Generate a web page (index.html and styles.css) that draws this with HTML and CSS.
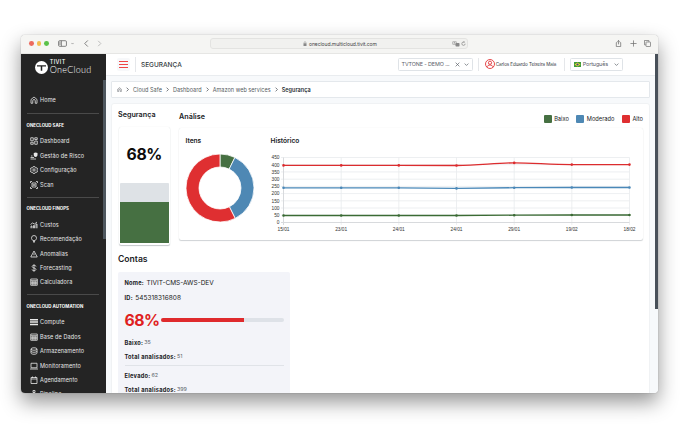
FILE: index.html
```html
<!DOCTYPE html>
<html lang="pt-BR">
<head>
    <meta charset="UTF-8">
    <meta name="viewport" content="width=device-width, initial-scale=1.0">
    <title>OneCloud - Segurança</title>
    <link rel="stylesheet" href="styles.css">
</head>
<body>
    <!-- ícones reutilizados -->
    <svg class="sprite" viewBox="0 0 16 16">
        <symbol id="i-home" viewBox="0 0 16 16"><path d="M2 7l6-5 6 5v7.500h-3.500V9.500a2.500 2.500 0 0 0-5 0v5H2z"/></symbol>
        <symbol id="i-dashboard" viewBox="0 0 16 16"><path d="M1.500 1.500h5v6h-5zM9.500 1.500h5v3.500h-5zM9.500 8h5v6.500h-5zM1.500 10.500h5v4h-5z"/></symbol>
        <symbol id="i-risk" viewBox="0 0 16 16"><path d="M1 14h11M1 11h7M2 8h3"/><path class="fill" d="M7.500 2l3.700-1L15 2v4c0 2-2 4-3.800 4s-3.700-2-3.700-4z"/></symbol>
        <symbol id="i-gear" viewBox="0 0 16 16"><path d="M6.500 1h3l.6 2 1.800 1 2-.5 1.500 2.600L14 7.600v1l1.400 1.400-1.500 2.600-2-.5-1.800 1-.6 2h-3l-.6-2-1.800-1-2 .5L.6 10 2 8.600v-1L.6 6.100l1.500-2.600 2 .5 1.800-1z"/><circle cx="8" cy="8" r="2.300"/></symbol>
        <symbol id="i-scan" viewBox="0 0 16 16"><path d="M1 4V1h3M12 1h3v3M15 12v3h-3M4 15H1v-3M4 4h8v8H4zM6.500 6v4M9.500 6v4"/></symbol>
        <symbol id="i-cost" viewBox="0 0 16 16"><path d="M1 7l4-3 4 2 5-4M2 14.500V10h2v4.500M7 14.500V9h2v5.500M12 14.500V6h2v8.500"/></symbol>
        <symbol id="i-bulb" viewBox="0 0 16 16"><path d="M6 11C3.500 9.500 3 7.500 3 6a5 5 0 0 1 10 0c0 1.500-.5 3.500-3 5zM6 13h4M7 15h2"/></symbol>
        <symbol id="i-alert" viewBox="0 0 16 16"><path d="M8 2l6.500 12h-13zM8 6.500v3.500M8 11.500v1"/></symbol>
        <symbol id="i-dollar" viewBox="0 0 16 16"><path d="M12 5c0-1.500-1.500-2.300-4-2.300S4.300 3.500 4.300 5.200c0 3.600 7.600 2 7.600 5.500 0 1.700-1.500 2.500-3.900 2.500s-4-.9-4-2.400M8 .5v15"/></symbol>
        <symbol id="i-calc" viewBox="0 0 16 16"><path d="M1.500 2h13v12.500h-13zM1.500 5.500h13M1.500 8.500h13M1.500 11.500h13M5.800 5.500v9M10.200 5.500v9"/></symbol>
        <symbol id="i-compute" viewBox="0 0 16 16"><path class="fill" d="M0 2h16v3H0zM0 6.700h16v3H0zM0 11.400h16v3H0z"/></symbol>
        <symbol id="i-disk" viewBox="0 0 16 16"><ellipse cx="8" cy="4" rx="6" ry="2.500"/><path d="M2 4v8c0 3.400 12 3.400 12 0V4M2 8c0 3.400 12 3.400 12 0"/></symbol>
        <symbol id="i-screen" viewBox="0 0 16 16"><path d="M2 2.500h12v9H2zM0 14h16"/></symbol>
        <symbol id="i-calendar" viewBox="0 0 16 16"><path d="M2 3h12v12H2zM2 6h12M5 1v3M11 1v3"/></symbol>
        <symbol id="i-pipe" viewBox="0 0 16 16"><path d="M6 1h4v4H6zM8 5v4M2 12V9h12v3M0 12h4v3H0zM12 12h4v3h-4z"/></symbol>
        <symbol id="i-down" viewBox="0 0 16 16"><path d="M2 5l6 6 6-6"/></symbol>
        <symbol id="i-right" viewBox="0 0 16 16"><path d="M5 2l6 6-6 6"/></symbol>
        <symbol id="i-left" viewBox="0 0 16 16"><path d="M11 1L4 8l7 7"/></symbol>
    </svg>

    <div class="window">
        <div class="toolbar">
            <div class="lights"><i class="red"></i><i class="yellow"></i><i class="green"></i></div>
            <svg class="tb-panel" viewBox="0 0 16 12"><rect x="1" y="1" width="14" height="10" rx="2"/><path d="M6 1v10M2.500 3.500h2M2.500 5.500h2M2.500 7.500h2"/></svg>
            <svg class="tb-caret"><use href="#i-down"/></svg>
            <svg class="tb-back"><use href="#i-left"/></svg>
            <svg class="tb-next"><use href="#i-right"/></svg>
            <div class="address">
                <svg class="lock" viewBox="0 0 8 10"><path class="fill" d="M1 4.500h6V10H1z"/><path d="M2.300 4.500V3a1.700 1.700 0 0 1 3.400 0v1.500"/></svg>
                <span>onecloud.multicloud.tivit.com</span>
                <svg class="translate" viewBox="0 0 16 12"><rect x="1" y="1" width="8" height="6" rx="1.500"/><path d="M3 3h4M5 2.500v1.500l-2 2M5 4l2 2"/><rect class="fill" x="7" y="4" width="8" height="7" rx="1.500"/></svg>
                <svg class="reload" viewBox="0 0 12 12"><path d="M10 6.500A4 4 0 1 1 6 2.500h2M6.500.5l2 2-2 2"/></svg>
            </div>
            <div class="tb-actions">
                <svg viewBox="0 0 16 16"><path d="M5 6H3v9h10V6h-2M8 10V1M5 4l3-3 3 3"/></svg>
                <svg viewBox="0 0 16 16"><path d="M8 1v14M1 8h14"/></svg>
                <svg viewBox="0 0 16 16"><path d="M4 11H1V1h10v3"/><rect x="4.500" y="4.500" width="10.500" height="10.500" rx="1.500"/></svg>
            </div>
        </div>

        <div class="app">
            <aside class="sidebar">
                <div class="brand">
                    <svg viewBox="0 0 26 26"><circle cx="13" cy="13" r="13"/><path d="M4 8.500h18v2.500h-7.500v8.500h-3V11H4z"/></svg>
                    <div class="brand-name"><b>TIVIT</b><span>OneCloud</span></div>
                </div>
                <nav class="menu">
                    <a class="home"><svg><use href="#i-home"/></svg>Home</a>
                    <section>
                        <h4>ONECLOUD SAFE</h4>
                        <a><svg><use href="#i-dashboard"/></svg>Dashboard</a>
                        <a><svg><use href="#i-risk"/></svg>Gestão de Risco</a>
                        <a><svg><use href="#i-gear"/></svg>Configuração</a>
                        <a><svg><use href="#i-scan"/></svg>Scan</a>
                    </section>
                    <section>
                        <h4>ONECLOUD FINOPS</h4>
                        <a><svg><use href="#i-cost"/></svg>Custos</a>
                        <a><svg><use href="#i-bulb"/></svg>Recomendação</a>
                        <a><svg><use href="#i-alert"/></svg>Anomalias</a>
                        <a><svg><use href="#i-dollar"/></svg>Forecasting</a>
                        <a><svg><use href="#i-calc"/></svg>Calculadora</a>
                    </section>
                    <section>
                        <h4>ONECLOUD AUTOMATION</h4>
                        <a><svg><use href="#i-compute"/></svg>Compute</a>
                        <a><svg><use href="#i-calc"/></svg>Base de Dados</a>
                        <a><svg><use href="#i-disk"/></svg>Armazenamento</a>
                        <a><svg><use href="#i-screen"/></svg>Monitoramento</a>
                        <a><svg><use href="#i-calendar"/></svg>Agendamento</a>
                        <a><svg><use href="#i-pipe"/></svg>Pipeline</a>
                    </section>
                </nav>
                <div class="side-scroll"></div>
            </aside>

            <main class="page">
                <header class="topbar">
                    <div class="burger"><i></i><i></i><i></i></div>
                    <h1>SEGURANÇA</h1>
                    <div class="select tenant"><span>TVTONE - DEMO ...</span><svg viewBox="0 0 16 16"><path d="M2 2l12 12M14 2L2 14"/></svg><svg><use href="#i-down"/></svg></div>
                    <div class="user">
                        <svg viewBox="0 0 20 20"><circle cx="10" cy="10" r="9"/><circle cx="10" cy="7.500" r="3.200"/><path d="M4 16.500c0-6 12-6 12 0"/></svg>
                        <span>Carlos Eduardo Teixeira Maia</span>
                    </div>
                    <div class="select lang">
                        <svg class="flag" viewBox="0 0 14 10"><path fill="#3f9b3a" d="M0 0h14v10H0z"/><path fill="#f2d82e" d="M7 1l6 4-6 4-6-4z"/><circle cx="7" cy="5" r="2.200" fill="#2b4a9b"/></svg>
                        <span>Português</span><svg><use href="#i-down"/></svg>
                    </div>
                </header>

                <div class="crumbs">
                    <svg class="crumb-home"><use href="#i-home"/></svg>
                    <svg><use href="#i-right"/></svg><span>Cloud Safe</span>
                    <svg><use href="#i-right"/></svg><span>Dashboard</span>
                    <svg><use href="#i-right"/></svg><span>Amazon web services</span>
                    <svg><use href="#i-right"/></svg><b>Segurança</b>
                </div>

                <div class="panel">
                    <div class="overview">
                        <div class="security">
                            <h2>Segurança</h2>
                            <div class="score-card">
                                <strong>68%</strong>
                                <div class="tank"><div class="tank-fill"></div></div>
                            </div>
                        </div>
                        <div class="analysis">
                            <div class="analysis-head">
                                <h2>Análise</h2>
                                <ul class="legend">
                                    <li><i class="low"></i>Baixo</li>
                                    <li><i class="mid"></i>Moderado</li>
                                    <li><i class="high"></i>Alto</li>
                                </ul>
                            </div>
                            <div class="charts-card">
                                <div class="items">
                                    <h3>Itens</h3>
                                    <svg class="donut" viewBox="-35 -35 70 70">
                                        <path fill="#467042" d="M0-34A34 34 0 0 1 14.900-30.560L9.200-18.880A21 21 0 0 0 0-21z"/>
                                        <path fill="#4e88b4" d="M14.900-30.560A34 34 0 0 1 15.170 30.430L9.370 18.790A21 21 0 0 0 9.200-18.880z"/>
                                        <path fill="#df2f31" d="M15.170 30.430A34 34 0 1 1 0-34V-21A21 21 0 1 0 9.370 18.790z"/>
                                    </svg>
                                </div>
                                <div class="history">
                                    <h3>Histórico</h3>
                                    <svg class="lines" viewBox="265 150 378 86">
                                        <path class="grid" d="M281 157.500H629.500M281 164.700H629.500M281 171.900H629.500M281 179.200H629.500M281 186.400H629.500M281 193.600H629.500M281 200.800H629.500M281 208H629.500M281 215.300H629.500M283.500 157.500V225M341.200 157.500V225M398.800 157.500V225M456.500 157.500V225M514.200 157.500V225M571.800 157.500V225M629.500 157.500V225"/>
                                        <path class="axis" d="M281 222.500H629.500M283.500 157.500V225"/>
                                        <g class="ylab">
                                            <text x="279.500" y="159.300">450</text><text x="279.500" y="166.500">400</text><text x="279.500" y="173.700">350</text><text x="279.500" y="181">300</text><text x="279.500" y="188.200">250</text><text x="279.500" y="195.400">200</text><text x="279.500" y="202.600">150</text><text x="279.500" y="209.800">100</text><text x="279.500" y="217.100">50</text><text x="279.500" y="224.300">0</text>
                                        </g>
                                        <g class="xlab">
                                            <text x="283.500" y="231">15/01</text><text x="341.200" y="231">23/01</text><text x="398.800" y="231">24/01</text><text x="456.500" y="231">24/01</text><text x="514.200" y="231">29/01</text><text x="571.800" y="231">19/02</text><text x="629.500" y="231">18/02</text>
                                        </g>
                                        <g class="s-high"><path d="M283.500 165.400H398.800L456.500 165.500C480 165.300 495 162.900 514.200 162.900C533 162.900 550 164.600 571.800 164.600H629.500"/><path class="dots" d="M283.500 165.400h0M341.200 165.400h0M398.800 165.400h0M456.500 165.500h0M514.200 162.900h0M571.800 164.600h0M629.500 164.600h0"/></g>
                                        <g class="s-mid"><path d="M283.500 187.800H398.800L456.500 188.400L514.200 187.700L571.800 187.500H629.500"/><path class="dots" d="M283.500 187.800h0M341.200 187.800h0M398.800 187.800h0M456.500 188.400h0M514.200 187.700h0M571.800 187.500h0M629.500 187.500h0"/></g>
                                        <g class="s-low"><path d="M283.500 215.500H456.500L514.200 215.200L571.800 215H629.500"/><path class="dots" d="M283.500 215.500h0M341.200 215.500h0M398.800 215.500h0M456.500 215.500h0M514.200 215.200h0M571.800 215h0M629.500 215h0"/></g>
                                    </svg>
                                </div>
                            </div>
                        </div>
                    </div>

                    <h2 class="accounts-title">Contas</h2>
                    <div class="account">
                        <p class="row big"><b>Nome:</b><span>TIVIT-CMS-AWS-DEV</span></p>
                        <p class="row big"><b>ID:</b><span>545318316808</span></p>
                        <div class="rate"><strong>68%</strong><div class="bar"><div class="bar-fill"></div></div></div>
                        <p class="row"><b>Baixo:</b><span>35</span></p>
                        <p class="row"><b>Total analisados:</b><span>51</span></p>
                        <hr>
                        <p class="row"><b>Elevado:</b><span>62</span></p>
                        <p class="row"><b>Total analisados:</b><span>399</span></p>
                    </div>
                </div>
                <div class="page-scroll"></div>
            </main>
        </div>
    </div>
</body>
</html>
```
FILE: styles.css
```css
* {
    box-sizing: border-box;
    margin: 0;
    padding: 0;
}

body {
    width: 680px;
    height: 442px;
    overflow: hidden;
    background: #fff;
    font-family: Inter, "Noto Sans", sans-serif;
    padding: 34.500px 0 0 21px;
    color: #202124;
}

svg {
    display: block;
    flex: none;
    fill: none;
    stroke: currentColor;
}

.fill { fill: currentColor; stroke: none; }
.sprite { position: absolute; width: 0; height: 0; }

/* janela do navegador */
.window {
    width: 637px;
    height: 358.800px;
    border-radius: 4px;
    overflow: hidden;
    background: #fff;
    box-shadow: 0 0 1px rgba(0, 0, 0, .45), 0 9px 20px rgba(0, 0, 0, .42);
}

.toolbar {
    height: 19.500px;
    background: #f5f5f3;
    border-bottom: 1px solid #e6e6e4;
    display: flex;
    align-items: center;
    padding: 0 7px 0 8px;
    color: #707070;
}

.lights { display: flex; gap: 2.800px; }
.lights i { width: 4.800px; height: 4.800px; border-radius: 50%; }
.lights .red { background: #ec6a5e; }
.lights .yellow { background: #f4bd4f; }
.lights .green { background: #5bc24a; }

.tb-panel { width: 9px; height: 7px; margin-left: 9px; stroke-width: 1.500; }
.tb-caret { width: 3px; height: 3px; margin-left: 4px; stroke-width: 3; }
.tb-back { width: 7px; height: 7px; margin-left: 9px; stroke-width: 2; }
.tb-next { width: 7px; height: 7px; margin-left: 6px; stroke-width: 2; color: #b5b5b5; }

.address {
    width: 258px;
    height: 11px;
    margin-left: 107px;
    border: 1px solid #e3e3e1;
    border-radius: 3px;
    background: #f1f1ef;
    display: flex;
    align-items: center;
    padding-left: 92px;
    font-size: 5px;
    letter-spacing: -.06px;
    color: #444;
}

.address span { width: 68px; white-space: nowrap; }
.lock { width: 4px; height: 5px; margin-right: 2px; color: #888; }
.translate { width: 8px; height: 6px; margin-left: 75px; color: #888; }
.reload { width: 5px; height: 5px; margin-left: 1.500px; }

.tb-actions { display: flex; gap: 7.500px; margin-left: auto; }
.tb-actions svg { width: 7px; height: 7px; stroke-width: 1.700; }

.app { display: flex; height: 339.500px; }

/* menu lateral */
.sidebar {
    width: 85px;
    flex: none;
    background: #242424;
    color: #e8e8e8;
    position: relative;
    overflow: hidden;
}

.brand {
    height: 26px;
    display: flex;
    align-items: center;
    gap: 1.800px;
    padding-left: 14px;
}

.brand svg { width: 13px; height: 13px; fill: #fff; stroke: none; }
.brand svg path { fill: #242424; }
.brand-name { display: flex; flex-direction: column; gap: .5px; color: #fff; }
.brand-name b { font: 500 5.500px/5.500px Inter, sans-serif; letter-spacing: .35px; }
.brand-name span { font: 300 9px/8px Lato, sans-serif; letter-spacing: .25px; }

.menu { padding: 13px 7.500px 0 5.500px; }

.menu a {
    display: flex;
    align-items: center;
    height: 14.400px;
    padding-left: 3.500px;
    gap: 2px;
    font-size: 5.500px;
    letter-spacing: .12px;
    white-space: nowrap;
}

.menu a svg { width: 8px; height: 8px; stroke-width: 1.600; }

.menu section {
    border-top: 1px solid #4a4a4a;
    padding: 7.500px 0 4.700px;
}

.menu .home { margin-bottom: 5.900px; }

.menu h4 {
    height: 8px;
    line-height: 8px;
    font-size: 4.400px;
    font-weight: 700;
    letter-spacing: .03px;
    margin-bottom: 4.500px;
    color: #fff;
    white-space: nowrap;
}

.side-scroll {
    position: absolute;
    right: 0;
    top: 26px;
    width: 3px;
    height: 159px;
    background: #4d565e;
}

/* conteúdo */
.page {
    flex: 1;
    min-width: 0;
    background: #f7f9fb;
    position: relative;
}

.page-scroll {
    position: absolute;
    right: 0;
    top: 0;
    width: 3px;
    height: 255px;
    background: #485059;
}

.topbar {
    height: 21.500px;
    background: #fff;
    border-bottom: 1px solid #e9ecef;
    display: flex;
    align-items: center;
    padding-left: 11px;
}

.burger {
    width: 13px;
    height: 13px;
    border-radius: 2px;
    background: #f7f8fa;
    display: flex;
    flex-direction: column;
    justify-content: center;
    align-items: center;
    gap: 2px;
}

.burger i { width: 9px; height: 1px; background: #ef4444; }

.topbar h1 {
    font-size: 6.500px;
    line-height: 14px;
    padding-top: 1px;
    font-weight: 500;
    margin-left: 5px;
    padding-left: 5px;
    border-left: 1px solid #e5e7ea;
    width: 263px;
    color: #333a40;
}

.select {
    height: 13.500px;
    border: 1px solid #dfe3e7;
    border-radius: 1.500px;
    display: flex;
    align-items: center;
    font-size: 5.400px;
    color: #5a6068;
    white-space: nowrap;
}

.select svg { width: 5px; height: 5px; stroke-width: 2.200; }

.tenant { width: 75px; padding-left: 2.500px; }
.tenant span { width: 53.500px; letter-spacing: -.1px; }
.tenant svg + svg { margin-left: 4px; }

.user {
    display: flex;
    align-items: center;
    gap: 1.200px;
    height: 13px;
    margin: 0 5px;
    padding-left: 5.500px;
    width: 87px;
    border-left: 1px solid #e5e7ea;
    border-right: 1px solid #e5e7ea;
    font-size: 4.500px;
    letter-spacing: -.05px;
    white-space: nowrap;
    color: #33383d;
}

.user svg { width: 10px; height: 10px; stroke: #e02b2d; stroke-width: 1.700; }

.lang { width: 53px; padding-left: 2.500px; }
.lang .flag { width: 7px; height: 5px; stroke: none; }
.lang span { width: 31px; margin-left: 2.200px; letter-spacing: -.1px; }

.crumbs {
    height: 17px;
    margin: 5.500px 8.500px 0 5px;
    background: #fff;
    border: 1px solid #e4e8ec;
    border-radius: 1px;
    display: flex;
    align-items: center;
    padding-left: 5px;
    font-size: 5.500px;
    letter-spacing: .04px;
    color: #555b61;
    white-space: nowrap;
}

.crumbs svg { width: 5px; height: 5px; margin: 0 3px; stroke-width: 2.500; }
.crumbs .crumb-home { margin: 0; stroke-width: 1.500; }
.crumbs b { font-weight: 600; letter-spacing: .04px; color: #2c3036; }

.panel {
    height: 300px;
    margin: 5px 8.500px 0 5px;
    padding: 0 5.500px 0 7px;
    background: #fff;
    border: 1px solid #f0f2f4;
    border-radius: 3px 3px 0 0;
}

.overview { display: flex; gap: 8.500px; }

h2 {
    font-size: 7.200px;
    line-height: 10px;
    font-weight: 600;
}

h3 {
    font-size: 6.600px;
    line-height: 9px;
    font-weight: 600;
}

.security { width: 53px; padding-top: 6px; }
.security h2 { margin-left: -1px; white-space: nowrap; }

.score-card {
    height: 117.500px;
    margin-top: 7px;
    margin-left: -.5px;
    padding: 0 1px 1.500px;
    border-radius: 2px;
    box-shadow: 0 1px 1px #c4c7ca, 0 0 1px #dcdfe2;
    display: flex;
    flex-direction: column;
}

.score-card strong {
    height: 55.500px;
    line-height: 55px;
    text-align: center;
    font-size: 15.800px;
    font-weight: 700;
    letter-spacing: -.4px;
    color: #0c0c0c;
}

.tank {
    flex: 1;
    display: flex;
    align-items: flex-end;
    background: #dee2e6;
    border-radius: 1px;
}

.tank-fill { width: 100%; height: 68%; background: #467042; }

.analysis { flex: 1; }
.analysis-head h2 { letter-spacing: .05px; margin-left: .5px; }

.analysis-head {
    height: 23.500px;
    display: flex;
    justify-content: space-between;
    padding-top: 7.500px;
}

.legend {
    display: flex;
    list-style: none;
    gap: 7.500px;
    font-size: 5.700px;
    line-height: 8px;
    padding-top: 3.300px;
}

.legend li { display: flex; gap: 2.500px; }
.legend i { width: 8px; height: 8px; border-radius: 1px; }
.low { background: #467042; }
.mid { background: #4e88b4; }
.high { background: #df2f31; }

.charts-card {
    display: flex;
    height: 112.500px;
    border-radius: 2px;
    box-shadow: 0 1px 1px #cfd2d5, 0 0 1px #dcdfe2;
}

.items { width: 86.500px; padding: 9.500px 0 0 6.500px; }
.items h3 { margin-left: .5px; }
.donut { width: 70px; height: 70px; margin-top: 7px; stroke: #fff; stroke-width: .8; }

.history { padding-top: 9.500px; }
.history h3 { margin-left: 5.500px; }
.lines { width: 378px; height: 86px; margin-top: 4px; }
.grid { stroke: #e9ebed; stroke-width: .8; }
.axis { stroke: #d8dadd; stroke-width: 1; }

.lines text {
    font: 4.800px "Liberation Sans", Arial, sans-serif;
    fill: #333;
    stroke: none;
}

.ylab { text-anchor: end; }
.xlab { text-anchor: middle; }
.lines g path { stroke-width: 1.300; }
.lines g .dots { stroke-width: 2.600; stroke-linecap: round; }
.s-high { stroke: #dc2c2e; }
.s-mid { stroke: #4a88b8; }
.s-low { stroke: #3b6b34; }

.accounts-title { margin: 8px 0 0 -1px; font-size: 8.600px; line-height: 12px; }

.account {
    width: 172px;
    height: 130px;
    margin: 7px 0 0 -1px;
    padding: 3.500px 6.500px 0;
    background: #f3f4f9;
    border-radius: 2px;
}

.row {
    height: 14px;
    display: flex;
    align-items: center;
    font-size: 5.700px;
    gap: 1px;
    white-space: nowrap;
}

.row span { color: #60656b; font-size: 5.400px; }
.row b { font-weight: 700; letter-spacing: .26px; }
.row.big { height: 15px; gap: 2.500px; }
.row.big b { letter-spacing: .24px; }
.row.big span { font-size: 6.500px; color: #222; }

.rate {
    height: 30px;
    display: flex;
    align-items: center;
    gap: 3px;
}

.rate strong { font-size: 15.800px; color: #df1f22; width: 33.500px; letter-spacing: -.5px; }
.bar { flex: 1; height: 4px; border-radius: 2px; background: #dee2e8; overflow: hidden; }
.bar-fill { width: 68%; height: 100%; background: #df2a2d; }

.account hr { border: 0; border-top: 1px solid #e0e3e8; margin: 2px 0; }
```
